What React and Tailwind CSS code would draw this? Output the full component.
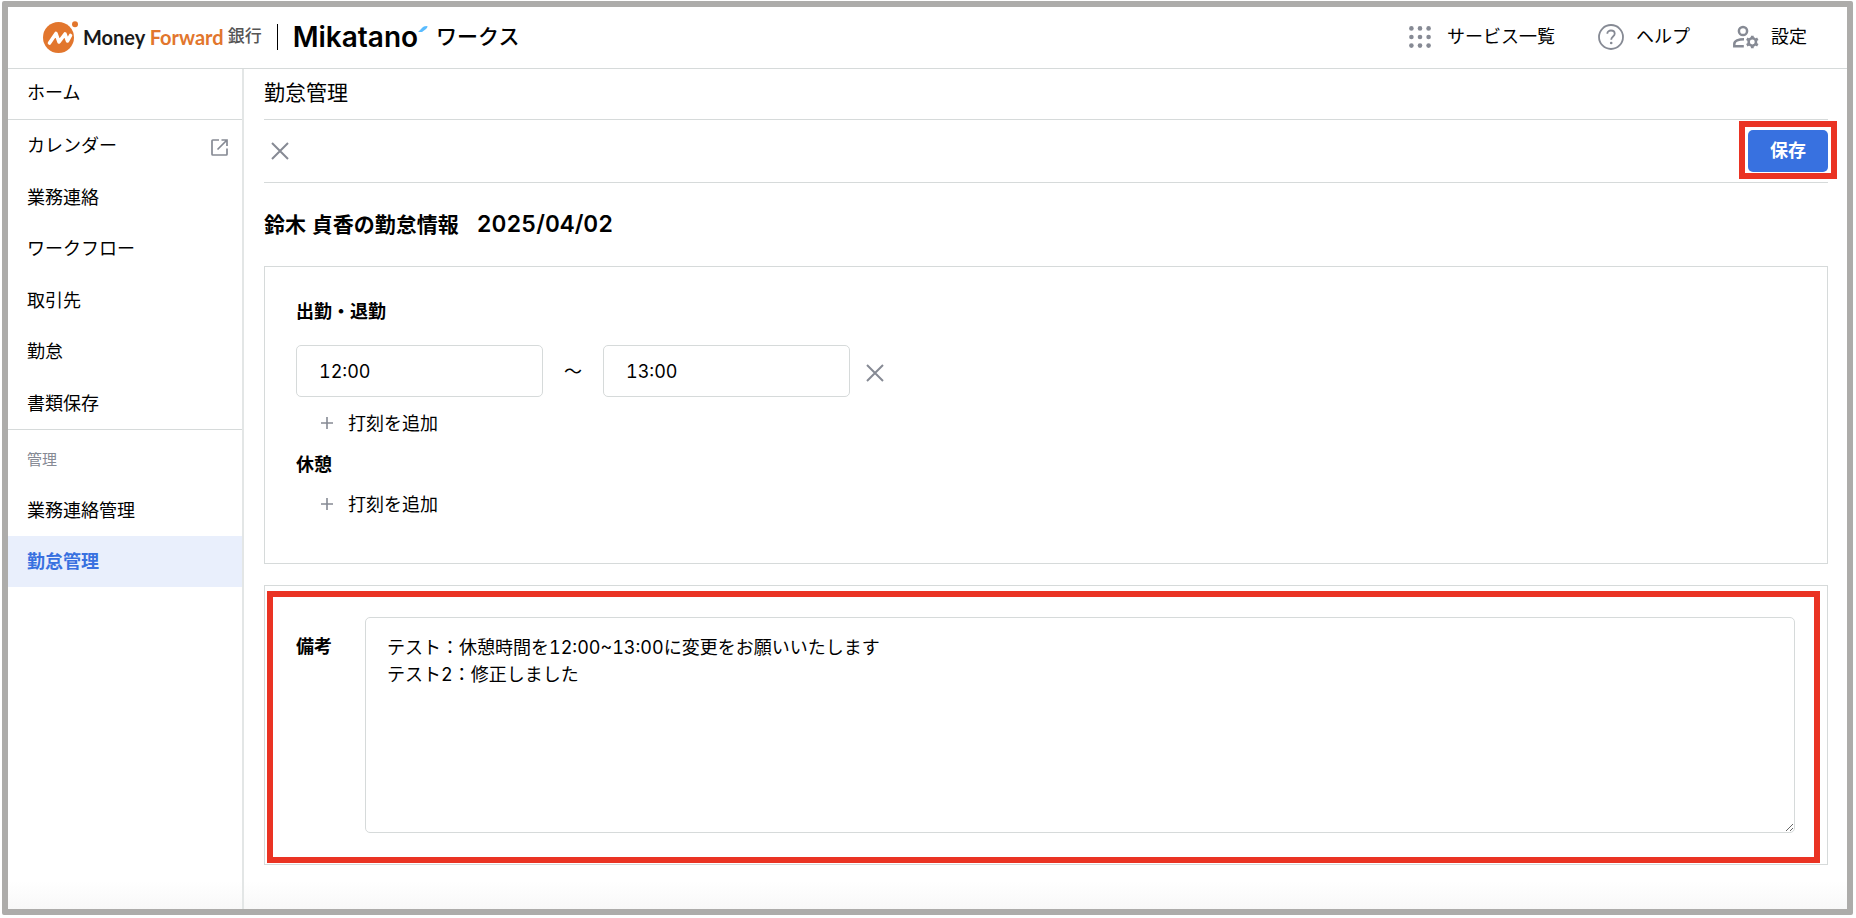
const serviceItems = ["カレンダー", "業務連絡", "ワークフロー", "取引先", "勤怠", "書類保存"];

const CloseIcon = () => (
  <svg viewBox="0 0 18 18" className="h-[18px] w-[18px]" fill="none" stroke="currentColor" strokeWidth="2" aria-hidden="true">
    <path d="M1 1l16 16M17 1L1 17" />
  </svg>
);

const PlusIcon = () => (
  <svg viewBox="0 0 12 12" className="h-3 w-3 text-[#868a94]" fill="none" stroke="currentColor" strokeWidth="1.6" aria-hidden="true">
    <path d="M6 0v12M0 6h12" />
  </svg>
);

const ExternalIcon = () => (
  <svg viewBox="0 0 17 17" className="mt-1 h-[17px] w-[17px] text-[#868a94]" fill="none" stroke="currentColor" strokeWidth="1.7" aria-hidden="true">
    <path d="M8 1H1.8a.8.8 0 0 0-.8.8v13.4c0 .5.3.8.8.8h13.4c.5 0 .8-.3.8-.8V9.500M10.500 1H16v6M16 1L6.500 10.500" />
  </svg>
);

const DotsIcon = () => (
  <svg viewBox="0 0 22 22" className="mr-1 h-[22px] w-[22px]" fill="currentColor" aria-hidden="true">
    {[2.4, 11, 19.6].map((y) =>
      [2.4, 11, 19.6].map((x) => <circle key={`${x}-${y}`} cx={x} cy={y} r="2.3" />)
    )}
  </svg>
);

const HelpIcon = () => (
  <svg viewBox="0 0 26 26" className="h-[26px] w-[26px]" fill="none" stroke="currentColor" strokeWidth="1.8" aria-hidden="true">
    <circle cx="13" cy="13" r="12" />
    <path d="M9.300 9.800c0-2 1.600-3.300 3.700-3.300s3.700 1.300 3.700 3.200c0 2.800-3.500 2.800-3.500 6" />
    <circle cx="13.200" cy="19" r="1.300" fill="currentColor" stroke="none" />
  </svg>
);

const UserGearIcon = () => (
  <svg viewBox="0 0 26 24" className="h-6 w-[26px]" fill="none" stroke="currentColor" strokeWidth="2.500" aria-hidden="true">
    <circle cx="10" cy="6" r="4.100" />
    <path d="M11 14.200C5.500 14.200 1.300 16 1.300 19v2.200h9.500" />
    <circle cx="19.300" cy="17" r="3.700" />
    <path
      d="M19.300 10.700v2.500M19.300 20.800v2.500M15.500 14.800l-1.700-1M23.100 14.800l1.700-1M15.500 19.200l-1.700 1M23.100 19.200l1.700 1"
      strokeWidth="2.800"
    />
  </svg>
);

const Logo = () => (
  <a href="#" className="flex items-center">
    <svg viewBox="0 0 36 32" className="h-8 w-9" aria-hidden="true">
      <circle cx="15.500" cy="16.500" r="15.500" fill="#e2762d" />
      <circle cx="32" cy="3.500" r="4.500" fill="#fff" />
      <circle cx="32" cy="3.300" r="3" fill="#e2762d" />
      <path d="M6.500 22L13 12.500l3 8.500L22 13l2.500 7L27.500 14.500" fill="none" stroke="#fff" strokeWidth="3.600" strokeLinejoin="round" strokeLinecap="round" />
    </svg>
    <span className="ml-1 font-[Lato] text-xl font-bold text-[#1a1a1a]">
      Money <span className="text-[#e2762d]">Forward</span>
    </span>
    <span className="ml-1 text-[17px] font-medium text-[#555]">銀行</span>
    <span className="ml-[15px] h-[26px] w-px bg-black" />
    <span className="ml-[15px] font-[Inter] text-[28px] leading-8 font-semibold">Mikatano</span>
    <svg viewBox="0 0 10 18" className="h-[18px] w-2.5 self-start" aria-hidden="true">
      <path d="M0 11L5 6Q6 5 9.500 5Q9.500 7 8 8L4 11z" fill="#5abcff" />
    </svg>
    <span className="ml-2 text-[21px] font-medium">ワークス</span>
  </a>
);

const HeaderLink = ({ icon, label }) => (
  <a href="#" className="flex items-center gap-3">
    <span className="text-[#868a94]">{icon}</span>
    {label}
  </a>
);

const Sidebar = () => (
  <nav className="w-[236px] shrink-0 border-r-2 border-[#e3e6e6]">
    <a href="#" className="flex h-[51px] items-center border-b border-[#d6dada] px-[19px] pb-[3px]">
      ホーム
    </a>
    <div className="grid h-[310px] grid-rows-6 border-b border-[#d6dada]">
      {serviceItems.map((item, i) => (
        <a key={item} href="#" className="flex items-center justify-between pr-3.5 pl-[19px]">
          {item}
          {i === 0 && <ExternalIcon />}
        </a>
      ))}
    </div>
    <p className="px-[19px] pt-[18px] pb-3 text-[15px] leading-6 text-[#868a94]">管理</p>
    <a href="#" className="flex h-[52px] items-center px-[19px]">
      業務連絡管理
    </a>
    <a href="#" aria-current="page" className="flex h-[51px] items-center bg-[#e9effc] px-[19px] font-bold text-[#3871e0]">
      勤怠管理
    </a>
  </nav>
);

const TimeInput = ({ label, value }) => (
  <input
    type="text"
    aria-label={label}
    defaultValue={value}
    className="h-[52px] w-[247px] rounded-[5px] border border-[#d6dada] px-[22px]"
  />
);

const AddButton = () => (
  <button type="button" className="ml-[25px] flex h-7 items-center gap-[15px]">
    <PlusIcon />
    打刻を追加
  </button>
);

const Highlight = ({ className }) => (
  <div className={`pointer-events-none absolute border-6 border-[#ea3323] ${className}`} />
);

export default function App() {
  return (
    <div className="flex min-h-screen bg-white pt-px pr-[3px] pb-[3px] pl-0.5 font-[Inter,'Noto_Sans_CJK_JP',sans-serif] text-lg leading-[27px] text-black tabular-nums">
      <div className="flex min-w-0 flex-1 flex-col rounded-xs border-6 border-[#adacaa] bg-[linear-gradient(to_top,#f8f8f8,#ffffff_28px)]">
        <header className="flex h-[62px] items-center justify-between border-b border-[#d6dada] pr-10 pb-0.5 pl-[35px]">
          <Logo />
          <div className="flex items-center gap-[43px]">
            <HeaderLink icon={<DotsIcon />} label="サービス一覧" />
            <HeaderLink icon={<HelpIcon />} label="ヘルプ" />
            <HeaderLink icon={<UserGearIcon />} label="設定" />
          </div>
        </header>
        <div className="flex flex-1">
          <Sidebar />
          <main className="min-w-0 flex-1 pr-[19px] pb-11 pl-5">
            <h1 className="flex h-[51px] items-center border-b border-[#d6dada] pb-[3px] text-[21px]">勤怠管理</h1>
            <div className="flex h-[63px] items-center justify-between border-b border-[#d6dada] pl-[7px]">
              <button type="button" aria-label="閉じる" className="text-[#868a94]">
                <CloseIcon />
              </button>
              <div className="relative">
                <button type="button" className="block h-[42px] w-20 rounded-[5px] bg-[#3871e0] pb-0.5 font-bold text-white">
                  保存
                </button>
                <Highlight className="-inset-x-[9px] -top-[9px] -bottom-[7px]" />
              </div>
            </div>
            <h2 className="flex h-[83px] items-center gap-[18px] text-[21px] font-bold">
              <span>鈴木 貞香の勤怠情報</span>
              <span className="text-[23px] font-semibold">2025/04/02</span>
            </h2>
            <section className="h-[298px] border border-[#d6dada] px-[31px] pt-[31px]">
              <h3 className="font-bold">出勤・退勤</h3>
              <div className="mt-5 flex items-center">
                <TimeInput label="出勤" value="12:00" />
                <span className="w-[60px] text-center">～</span>
                <TimeInput label="退勤" value="13:00" />
                <button type="button" aria-label="削除" className="mt-1 ml-4 text-[#868a94]">
                  <CloseIcon />
                </button>
              </div>
              <div className="mt-3">
                <AddButton />
              </div>
              <h3 className="mt-3.5 mb-3 font-bold">休憩</h3>
              <AddButton />
            </section>
            <section className="relative mt-[21px] flex items-start gap-[33px] border border-[#d6dada] py-[31px] pr-8 pl-[31px]">
              <label htmlFor="remarks" className="mt-4 shrink-0 font-bold">
                備考
              </label>
              <textarea
                id="remarks"
                className="h-[216px] flex-1 resize rounded-[5px] border border-[#d6dada] px-[21px] py-4"
                defaultValue={"テスト：休憩時間を12:00~13:00に変更をお願いいたします\nテスト2：修正しました"}
              />
              <Highlight className="top-[5px] right-[7px] bottom-px left-0.5" />
            </section>
          </main>
        </div>
      </div>
    </div>
  );
}
